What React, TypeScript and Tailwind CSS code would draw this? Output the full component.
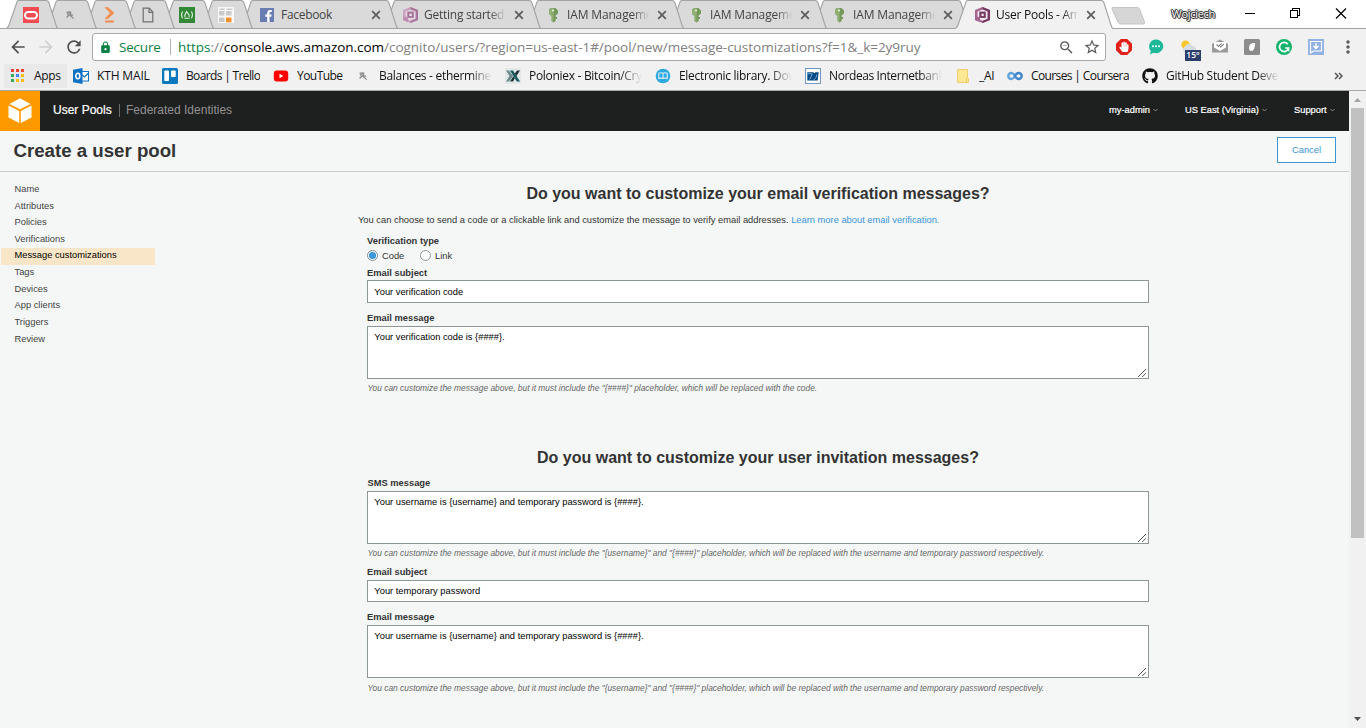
import React from "react";
import {
  MdArrowBack,
  MdArrowForward,
  MdRefresh,
  MdStarBorder,
  MdMoreVert,
  MdLock,
  MdZoomOut,
} from "react-icons/md";
import { FaGithub, FaFacebookF, FaHandPaper } from "react-icons/fa";

/* ---------- favicons ---------- */

const OracleIcon = () => (
  <svg width="16" height="16" viewBox="0 0 16 16">
    <rect width="16" height="16" fill="#f24b52" />
    <rect x="2" y="5" width="12" height="6.5" rx="3.2" fill="none" stroke="#fff" strokeWidth="2" />
  </svg>
);

const PickIcon = () => (
  <svg width="16" height="16" viewBox="0 0 16 16" fill="none" stroke="#8c8c8c">
    <path d="M4.5 5.2h4.8M5 7.5l3-3M4.6 10.5l3.8-4M7 7.2l4.6 4.4M8.6 5.5v2.7h2.6" strokeWidth="1.3" />
  </svg>
);

const PromptIcon = () => (
  <svg width="16" height="18" viewBox="0 0 16 18">
    <path d="M4 1.500h3l6 5.500-6 5.500H4L9.500 7z" fill="#f58b4c" stroke="#f58b4c" strokeWidth=".6" />
    <path d="M4 15.500h9" stroke="#f58b4c" strokeWidth="2" />
  </svg>
);

const PageIcon = () => (
  <svg width="12" height="16" viewBox="0 0 12 16" fill="none" stroke="#6e6e6e" strokeWidth="1.2">
    <path d="M1.2 1.2h6l3.6 3.8v9.8H1.2z" />
    <path d="M7 1.2V5.4h3.8" />
  </svg>
);

const CampIcon = () => (
  <svg width="16" height="16" viewBox="0 0 16 16">
    <rect width="16" height="16" fill="#338836" />
    <g fill="none" stroke="#e6f3e6" strokeWidth="1.1">
      <path d="M3.600 4.500q-2 3.300 0 6.800M12.400 4.500q2 3.300 0 6.800M5.500 11.300h5" />
      <path d="M6 10q-.6-2 1.500-5.400 3.400 3.400 2.500 5.400" />
    </g>
  </svg>
);

const CubesIcon = () => (
  <svg width="16" height="16" viewBox="0 0 16 16">
    <rect width="16" height="16" fill="#f8f8f8" />
    <g fill="#c9c9c9">
      <path d="M1 3l1.500-1.500H7L6 3zM8 3l1.500-1.500H15L13.500 3z" />
      <rect x="1" y="4" width="5.500" height="4.500" />
      <rect x="8" y="4" width="5.500" height="4.500" />
      <rect x="1" y="10.500" width="5.500" height="4.500" />
    </g>
    <rect x="8" y="10.500" width="5.500" height="4.800" fill="#f7902a" />
  </svg>
);

const FacebookIcon = () => (
  <span className="relative block h-[14px] w-[14px] overflow-hidden bg-[#6a7db3]">
    <FaFacebookF className="absolute left-[4px] top-[2px] h-[12px] w-[9px] text-white" />
  </span>
);

const CognitoIcon = ({ soft }: { soft?: boolean }) => (
  <svg width="15" height="16" viewBox="0 0 15 16">
    <path d="M7.500 0L15 3v10l-7.500 3L0 13V3z" fill={soft ? "#c9a3bf" : "#a4668f"} />
    <path d="M7.500 0L15 3v10l-7.500 3v-2.500l5-1.700V4.400l-5-2z" fill={soft ? "#a9749b" : "#753a63"} />
    <path d="M7.500 2.400l5 2v7.400l-5 2-5-2V4.400z" fill={soft ? "#e0d5dd" : "#f1e6ee"} />
    <rect x="4.300" y="4.600" width="6.500" height="6.300" fill={soft ? "#a9749b" : "#753a63"} />
    <rect x="6.500" y="6.700" width="2.200" height="2.300" fill="#eee" />
    <path d="M0 9.500l5 .5v5L0 13z" fill={soft ? "#c08cb3" : "#a4668f"} />
  </svg>
);

const KeyIcon = () => (
  <svg width="10" height="16" viewBox="0 0 10 16">
    <path d="M2.500 1h5L10 3.500v3L7.600 8.500V10H9v2H7.600v2L5.600 15.500 3.600 14V9L1 7V3z" fill="#75995a" />
    <path d="M1 3l2-2h2.500v14.500L3.600 14V9L1 7z" fill="#8fb072" />
    <circle cx="5" cy="3.500" r="1.100" fill="#e5efdc" />
  </svg>
);

const OutlookIcon = () => (
  <svg width="16" height="16" viewBox="0 0 16 16">
    <rect x="8" y="3.500" width="7.500" height="9.500" fill="#fff" stroke="#0f72c4" />
    <path d="M8 6l3.500 3L15.500 5" fill="none" stroke="#0f72c4" strokeWidth="1.200" />
    <path d="M0 1.800L9.500 0v16L0 14.200z" fill="#0f72c4" />
    <ellipse cx="4.800" cy="8" rx="2" ry="2.700" fill="none" stroke="#fff" strokeWidth="1.500" />
  </svg>
);

const TrelloIcon = () => (
  <svg width="16" height="16" viewBox="0 0 16 16">
    <rect width="16" height="16" rx="1.500" fill="#0c79bf" />
    <rect x="2.300" y="2.500" width="4.700" height="10.500" rx=".8" fill="#fff" />
    <rect x="9" y="2.500" width="4.700" height="6.500" rx=".8" fill="#fff" />
  </svg>
);

const YoutubeIcon = () => (
  <svg width="16" height="16" viewBox="0 0 16 16">
    <rect x=".8" y="2.500" width="14.400" height="11" rx="3" fill="#f00" />
    <path d="M6.500 5.800v4.400L10.300 8z" fill="#fff" />
  </svg>
);

const PoloniexIcon = () => (
  <svg width="16" height="16" viewBox="0 0 16 16">
    <rect width="16" height="16" fill="#e3e9e9" />
    <path d="M1 2.500h3L8 8l-4 5.500H1L4.500 8z" fill="#6a8a8c" />
    <path d="M5 2.500h3L15 13.500h-3.200z" fill="#15595f" />
    <path d="M12 2.500h3L11.500 8 9.800 5.600zM5 13.500h3L9.800 10.500 8.300 8.200z" fill="#22343a" />
  </svg>
);

const LibraryIcon = () => (
  <svg width="16" height="16" viewBox="0 0 16 16">
    <circle cx="8" cy="8" r="7.300" fill="#2eaae1" />
    <path d="M3.800 5.300q2.300-1 4.200 0 2-1 4.200 0v5.200q-2.200-.8-4.200 0-2-.8-4.200 0zM8 5.300v5.200" fill="none" stroke="#d9f0fb" strokeWidth="1.100" />
  </svg>
);

const NordeaIcon = () => (
  <svg width="16" height="16" viewBox="0 0 16 16">
    <rect x=".5" y=".5" width="15" height="15" fill="#fff" stroke="#6f97c0" />
    <path d="M2.300 4.200h6l1.200 1 1-1h3.200l-1 8.300H2.300z" fill="#004b87" />
    <path d="M2.300 6q3-.8 5 0l-2.500 5.500M8.500 12q3-2 3.500-5.500" fill="none" stroke="#9fbdd8" strokeWidth=".8" />
  </svg>
);

const FolderIcon = () => (
  <svg width="16" height="16" viewBox="0 0 16 16">
    <path d="M2.500 1.500h10v9h1v4h-11z" fill="#ffe793" stroke="#edd070" />
    <path d="M11.500 10.500v4" stroke="#e9c956" />
  </svg>
);

const CourseraIcon = () => (
  <svg width="16" height="16" viewBox="0 0 16 16" fill="none" strokeWidth="2.400">
    <path d="M8 8C6.500 5.500 5.500 5 4.300 5a3 3 0 000 6C6.500 11 7.500 8.500 8 8" stroke="#5fa3dd" />
    <path d="M8 8c1-2 2-3 3.700-3a3 3 0 010 6C10 11 9 10 8 8" stroke="#3f86cc" />
  </svg>
);

/* ---------- tab strip ---------- */

type TabProps = {
  icon: React.ReactNode;
  title?: string;
  active?: boolean;
  first?: boolean;
  z: string;
  fade?: boolean;
};

const Tab = ({ icon, title, active, first, z, fade }: TabProps) => {
  const w = title ? 158 : 52;
  const outline = `M0 28.5C2 28 2.500 26.500 3 25L11 2C11.500 .8 12 .5 13 .5H${w - 12}C${w - 10} .5 ${w - 9.5} 1.500 ${w - 9} 3L${w - 2} 25C${w - 1.5} 27 ${w - 1} 28 ${w} 28.5`;
  return (
    <div className={`relative h-[29px] shrink-0 ${z} ${title ? "w-[158px]" : "w-[52px]"} ${first ? "" : "-ml-[13px]"}`}>
      <svg className="absolute inset-0" width={w} height="29" viewBox={`0 0 ${w} 29`}>
        <path d={`${outline}V29H0z`} fill={active ? "#f1f1f1" : "#dadada"} />
        <path d={outline} fill="none" stroke="#a3a3a3" strokeWidth="1.100" />
        {!active && <path d={`M0 28.500H${w}`} stroke="#a3a3a3" />}
      </svg>
      {title ? (
        <div className="relative flex h-[30px] items-center pl-5">
          <span className="flex w-[21px] shrink-0 items-center">{icon}</span>
          <span
            className={`w-[84px] overflow-hidden whitespace-nowrap text-[12px] ${active ? "text-[#111]" : "text-[#444]"} ${title === "Facebook" ? "tracking-[-0.3px]" : title.startsWith("IAM") ? "tracking-[-0.15px]" : "tracking-[-0.25px]"} ${fade ? "[mask-image:linear-gradient(to_right,black_78%,transparent_98%)]" : ""}`}
          >
            {title}
          </span>
          <svg className="ml-[6px] shrink-0" width="10" height="10" viewBox="0 0 10 10">
            <path d="M1.200 1.200l7.600 7.600M8.800 1.200L1.200 8.800" stroke="#5c5c5c" strokeWidth="1.700" />
          </svg>
        </div>
      ) : (
        <div className="relative flex h-[30px] items-center justify-center pr-[2px]">{icon}</div>
      )}
    </div>
  );
};

const TabStrip = () => (
  <div className="flex h-[29px] bg-white pl-[6px] shadow-[inset_0_-1px_0_#a3a3a3]">
    <Tab z="z-[12]" first icon={<OracleIcon />} />
    <Tab z="z-[11]" icon={<PickIcon />} />
    <Tab z="z-[10]" icon={<PromptIcon />} />
    <Tab z="z-[9]" icon={<PageIcon />} />
    <Tab z="z-[8]" icon={<CampIcon />} />
    <Tab z="z-[7]" icon={<CubesIcon />} />
    <div className="flex shrink-0 [&>div+div]:-ml-[15px]">
      <Tab z="z-[6]" title="Facebook" icon={<FacebookIcon />} />
      <Tab z="z-[5]" fade title="Getting started" icon={<CognitoIcon soft />} />
      <Tab z="z-[4]" fade title="IAM Management" icon={<span className="pl-[2px]"><KeyIcon /></span>} />
      <Tab z="z-[3]" fade title="IAM Management" icon={<span className="pl-[2px]"><KeyIcon /></span>} />
      <Tab z="z-[2]" fade title="IAM Management" icon={<span className="pl-[2px]"><KeyIcon /></span>} />
      <Tab z="z-[20]" fade active title="User Pools - Amazon" icon={<CognitoIcon />} />
    </div>
    <svg className="-ml-[2px] mt-[7px] shrink-0" width="35" height="18" viewBox="0 0 35 18">
      <path d="M2 .5h24c1.500 0 2 .5 2.500 1.500l5 13c.5 1.500 0 2-1.500 2H10c-1.500 0-2.500-.5-3-2L1 2C.6 1 1 .5 2 .5z" fill="#d6d6d6" stroke="#c4c4c4" />
    </svg>
    <span className="ml-auto mr-[29px] mt-[6px] text-[11px] leading-4 tracking-[-0.3px] text-white [text-shadow:1px_0_0_#333,-1px_0_0_#333,0_1px_0_#333,0_-1px_0_#333,1px_1px_1px_#555,-1px_-1px_1px_#555]">
      Wojciech
    </span>
    <svg className="mt-[7px] shrink-0" width="122" height="14" viewBox="0 0 122 14" fill="none" stroke="#000" shapeRendering="crispEdges">
      <path d="M1 6.500h10M46.500 3.500h7v7h-7zM48.500 3V1.500h7v7H54" />
      <path d="M92 1.500l10 10M102 1.500l-10 10" shapeRendering="auto" strokeWidth="1.200" />
    </svg>
  </div>
);

/* ---------- toolbar ---------- */

const Toolbar = () => (
  <div className="flex h-[33px] items-center bg-[#f1f1f1] pt-[3px]">
    <MdArrowBack className="ml-[8px] h-5 w-5 text-[#505050]" />
    <MdArrowForward className="ml-[8px] h-5 w-5 text-[#cfcfcf]" />
    <MdRefresh className="ml-[8px] h-5 w-5 text-[#505050]" />
    <div className="ml-[8px] flex h-[28px] w-[1014px] items-center rounded-[3px] border border-[#a8a8a8] bg-white">
      <MdLock className="ml-[6px] h-[13px] w-[13px] text-[#0b8043]" />
      <span className="ml-[7px] w-[49px] whitespace-nowrap text-[13.5px] leading-5 tracking-[-0.2px] text-[#0b8043]">Secure</span>
      <span className="mx-[2px] h-4 w-px bg-[#b5b5b5]" />
      <span className="ml-[5px] w-[880px] whitespace-nowrap text-[13.5px] leading-5 tracking-[-0.025px] text-[#808080]">
        <span className="text-[#0b8043]">https</span>://<span className="text-black">console.aws.amazon.com</span>
        /cognito/users/?region=us-east-1#/pool/new/message-customizations?f=1&amp;_k=2y9ruy
      </span>
      <MdZoomOut className="h-[17px] w-[17px] shrink-0 text-[#5a5a5a]" />
      <MdStarBorder className="ml-[8px] h-[18px] w-[18px] shrink-0 text-[#5a5a5a]" />
    </div>
    <svg className="ml-[10px]" width="16" height="16" viewBox="0 0 16 16">
      <path d="M4.800 0h6.400L16 4.800v6.400L11.200 16H4.800L0 11.200V4.800z" fill="#e0201b" />
      <FaHandPaper x="2.700" y="2.500" size="10.500" color="#fff" />
    </svg>
    <svg className="ml-[16px]" width="16" height="16" viewBox="0 0 16 16">
      <path d="M8 .5a7.300 6.800 0 11-2.500 13.200L2 15.500l.8-3.500A7 7 0 018 .5z" fill="#1db89a" />
      <g fill="#fff"><circle cx="5" cy="7.300" r="1" /><circle cx="8" cy="7.300" r="1" /><circle cx="11" cy="7.300" r="1" /></g>
    </svg>
    <div className="relative ml-[16px] h-4 w-4">
      <svg width="16" height="16" viewBox="0 0 16 16">
        <circle cx="5.500" cy="5.800" r="4.200" fill="#f9c62b" />
        <path d="M4 13a3 3 0 01.500-5A4.500 4.500 0 0112.500 7a3 3 0 011 6z" fill="#d5dce2" />
      </svg>
      <span className="absolute left-[5px] top-[11px] flex h-[11px] w-4 items-center justify-center bg-[#2c3e6b] text-[8.5px] font-semibold leading-none text-white">15°</span>
    </div>
    <svg className="ml-[16px]" width="16" height="16" viewBox="0 0 16 16">
      <path d="M0 5l8-4.500L16 5v8.500H0z" fill="#9b9b9b" />
      <path d="M2 3h12v5.500L8 12 2 8.500z" fill="#fff" />
      <path d="M4.500 5.500l2 2 3-3M8 7.500l.8.500 3-3" fill="none" stroke="#888" strokeWidth="1.100" />
    </svg>
    <svg className="ml-[16px]" width="16" height="16" viewBox="0 0 16 16">
      <rect width="16" height="16" rx="1.500" fill="#8c8c8c" />
      <path d="M11 4C6.500 4 5 5.800 5 8.500 5 11 5.800 12 7 12c3 0 4-3.500 4-8z" fill="#fff" />
    </svg>
    <svg className="ml-[16px]" width="16" height="16" viewBox="0 0 16 16">
      <circle cx="8" cy="8" r="8" fill="#15b36b" />
      <path d="M11.800 5.200A4.600 4.600 0 1012.600 9H9.200M12.600 8.800v3.400" fill="none" stroke="#fff" strokeWidth="1.700" />
    </svg>
    <svg className="ml-[16px]" width="16" height="16" viewBox="0 0 16 16">
      <rect width="16" height="16" fill="#91b2e2" />
      <path d="M2.500 2.500h11v9.500h-8l-3 2z" fill="none" stroke="#fff" strokeWidth="1.200" />
      <path d="M8 4v5.500M5.500 7L8 9.600 10.500 7" fill="none" stroke="#fff" strokeWidth="1.400" />
    </svg>
    <MdMoreVert className="ml-[14px] h-5 w-5 text-[#5a5a5a]" />
  </div>
);

/* ---------- bookmarks ---------- */

type BookmarkProps = { icon: React.ReactNode; label: string; box: string; text?: string; fade?: boolean };

const Bookmark = ({ icon, label, box, text = "", fade }: BookmarkProps) => (
  <div className={`flex shrink-0 items-center ${box}`}>
    <span className="flex h-4 w-4 shrink-0 items-center justify-center">{icon}</span>
    <span
      className={`ml-2 overflow-hidden whitespace-nowrap ${text} ${fade ? "w-[113px] [mask-image:linear-gradient(to_right,black_80%,transparent)]" : ""}`}
    >
      {label}
    </span>
  </div>
);

const appColors = ["#ea4335", "#ea4335", "#ea4335", "#34a853", "#4285f4", "#fbbc05", "#34a853", "#fbbc05", "#fbbc05"];

const BookmarksBar = () => (
  <div className="flex h-[29px] items-center border-b border-[#a9a9a9] bg-[#f1f1f1] pb-[1px] pl-[4px] text-[12px] text-[#111]">
    <div className="flex h-6 w-[63px] items-center bg-[#e9e9e9] pl-[7px]">
      <svg width="13" height="13" viewBox="0 0 13 13">
        {appColors.map((c, i) => (
          <rect key={i} x={(i % 3) * 5} y={Math.floor(i / 3) * 5} width="3" height="3" fill={c} />
        ))}
      </svg>
      <span className="ml-[10px] tracking-[-0.3px]">Apps</span>
    </div>
    <span className="w-[6px]" />
    <Bookmark box="w-[89px]" icon={<OutlookIcon />} label="KTH MAIL" text="tracking-[-0.15px]" />
    <Bookmark box="w-[111px]" icon={<TrelloIcon />} label="Boards | Trello" text="tracking-[-0.65px]" />
    <Bookmark box="w-[82px]" icon={<YoutubeIcon />} label="YouTube" text="tracking-[-0.55px]" />
    <Bookmark box="w-[150px]" fade icon={<PickIcon />} label="Balances - ethermine.org" text="tracking-[-0.3px]" />
    <Bookmark box="w-[150px]" fade icon={<PoloniexIcon />} label="Poloniex - Bitcoin/Crypto" text="tracking-[-0.3px]" />
    <Bookmark box="w-[150px]" fade icon={<LibraryIcon />} label="Electronic library. Download" text="tracking-[-0.3px]" />
    <Bookmark box="w-[150px]" fade icon={<NordeaIcon />} label="Nordeas Internetbank" text="tracking-[-0.4px]" />
    <Bookmark box="w-[52px]" icon={<FolderIcon />} label="_AI" text="tracking-[-0.3px]" />
    <Bookmark box="w-[135px]" icon={<CourseraIcon />} label="Courses | Coursera" text="tracking-[-0.62px]" />
    <Bookmark box="w-[150px]" fade icon={<FaGithub className="h-4 w-4 text-[#111]" />} label="GitHub Student Developer" text="tracking-[-0.3px]" />
    <svg className="ml-[42px]" width="10" height="8" viewBox="0 0 10 8" fill="none" stroke="#555" strokeWidth="1.500">
      <path d="M1 1l3 3-3 3M5 1l3 3-3 3" />
    </svg>
  </div>
);

/* ---------- console page ---------- */

const HeaderMenu = ({ label, box }: { label: string; box: string }) => (
  <div className={`flex shrink-0 items-center text-[9.33px] text-white [-webkit-text-stroke:0.2px_white] ${box}`}>
    <span className="whitespace-nowrap">{label}</span>
    <svg className="ml-[3px]" width="5" height="4" viewBox="0 0 5 4">
      <path d="M.5 1l2 2 2-2" fill="none" stroke="#8a8a8a" />
    </svg>
  </div>
);

const ConsoleHeader = () => (
  <div className="flex h-10 items-center bg-[#1e1f1f]">
    <div className="flex h-10 w-10 items-center justify-center bg-[#ff9900]">
      <svg width="24" height="26" viewBox="0 0 24 26" fill="#fff">
        <path d="M12 .3l10.500 5.600L12 11.200 1.500 5.900z" />
        <path d="M.5 7.500l10.700 5.600v12L.5 19.600zM23.500 7.500l-10.700 5.600v12l10.700-5.500z" />
      </svg>
    </div>
    <div className="flex h-10 items-center pb-[2px] text-[12px]">
      <span className="ml-[13px] w-[66px] whitespace-nowrap text-white [-webkit-text-stroke:0.2px_white]">User Pools</span>
      <span className="h-[13px] w-px bg-[#6b6b6b]" />
      <span className="ml-[6px] whitespace-nowrap text-[#929292]">Federated Identities</span>
    </div>
    <div className="ml-auto flex h-10 items-center pb-px">
      <HeaderMenu label="my-admin" box="w-[76px]" />
      <HeaderMenu label="US East (Virginia)" box="w-[109px]" />
      <HeaderMenu label="Support" box="w-[55px]" />
    </div>
  </div>
);

const steps = [
  "Name",
  "Attributes",
  "Policies",
  "Verifications",
  "Message customizations",
  "Tags",
  "Devices",
  "App clients",
  "Triggers",
  "Review",
];

const Heading = ({ children, gap }: { children: React.ReactNode; gap: string }) => (
  <h2 className={`h-5 whitespace-nowrap text-center text-[16px] font-bold leading-5 text-[#333] ${gap}`}>{children}</h2>
);

const Label = ({ children, gap }: { children: React.ReactNode; gap: string }) => (
  <div className={`ml-[9px] h-[14px] text-[9.33px] font-bold leading-[14px] text-[#333] ${gap}`}>{children}</div>
);

const Area = ({ value }: { value: string }) => (
  <div className="relative ml-[9px] mt-px h-[53px] w-[782px]">
    <textarea
      className="block h-[53px] w-[782px] resize-none border border-[#8d9797] bg-white px-[6.33px] py-[4px] text-[9.33px] leading-[13px] text-black"
      defaultValue={value}
    />
    <svg className="absolute bottom-[2px] right-[3px]" width="8" height="8" viewBox="0 0 8 8" stroke="#555" fill="none">
      <path d="M0 8L8 0M4.200 8L8 4.200" />
    </svg>
  </div>
);

const Field = ({ value, box }: { value: string; box: string }) => (
  <input
    className={`ml-[9px] block w-[782px] border border-[#8d9797] bg-white px-[6.33px] text-[9.33px] leading-[13px] text-black ${box}`}
    defaultValue={value}
  />
);

const Hint = ({ children, gap }: { children: React.ReactNode; gap: string }) => (
  <div className={`ml-[9.500px] h-[14px] whitespace-nowrap text-[8.4px] italic leading-[14px] text-[#666] ${gap}`}>{children}</div>
);

const Radio = ({ on, label, box }: { on?: boolean; label: string; box: string }) => (
  <label className={`flex items-center text-[9.33px] text-[#333] ${box}`}>
    <svg width="12" height="12" viewBox="0 0 12 12">
      <circle cx="5.500" cy="5.500" r="5" fill="#fff" stroke={on ? "#7f8b93" : "#8d9797"} strokeWidth="1" />
      {on && <circle cx="5.500" cy="5.500" r="3.600" fill="#3b99d9" />}
    </svg>
    <span className="ml-[3px] pt-px">{label}</span>
  </label>
);

const MessageForm = () => (
  <main className="ml-[203px] w-[800px]">
    <Heading gap="mt-3">Do you want to customize your email verification messages?</Heading>
    <p className="mt-[10px] h-3 whitespace-nowrap text-[9.33px] leading-3 text-[#333]">
      You can choose to send a code or a clickable link and customize the message to verify email addresses.{" "}
      <a className="text-[#3b95d6]">Learn more about email verification.</a>
    </p>
    <Label gap="mt-2">Verification type</Label>
    <div className="ml-[9px] mt-px flex h-[14px] items-center">
      <Radio on label="Code" box="w-[53px]" />
      <Radio label="Link" box="" />
    </div>
    <Label gap="mt-[3px]">Email subject</Label>
    <Field box="h-[23px]" value="Your verification code" />
    <Label gap="mt-2">Email message</Label>
    <Area value="Your verification code is {####}." />
    <Hint gap="mt-[2px]">
      You can customize the message above, but it must include the "{"{####}"}" placeholder, which will be replaced with the code.
    </Hint>

    <Heading gap="mt-[53px]">Do you want to customize your user invitation messages?</Heading>
    <Label gap="mt-2 pl-[0.5px]">SMS message</Label>
    <Area value="Your username is {username} and temporary password is {####}." />
    <Hint gap="mt-[2px]">
      You can customize the message above, but it must include the "{"{username}"}" and "{"{####}"}" placeholder, which will be replaced with the username and temporary password respectively.
    </Hint>
    <Label gap="mt-[5px]">Email subject</Label>
    <Field box="mt-px h-[22px]" value="Your temporary password" />
    <Label gap="mt-2">Email message</Label>
    <Area value="Your username is {username} and temporary password is {####}." />
    <Hint gap="mt-[3px]">
      You can customize the message above, but it must include the "{"{username}"}" and "{"{####}"}" placeholder, which will be replaced with the username and temporary password respectively.
    </Hint>
  </main>
);

const Scrollbar = () => (
  <div className="flex w-[17px] shrink-0 flex-col items-center bg-[#f1f1f1]">
    <svg width="17" height="17" viewBox="0 0 17 17">
      <path d="M5 11l3.500-4 3.500 4z" fill="#a3a3a3" />
    </svg>
    <div className="h-[430px] w-[13px] bg-[#c1c1c1]" />
    <svg className="mt-auto" width="17" height="17" viewBox="0 0 17 17">
      <path d="M5 6h7L8.500 10z" fill="#505050" />
    </svg>
  </div>
);

export default function App() {
  return (
    <div className="flex h-[728px] w-[1366px] flex-col overflow-hidden bg-[#f1f1f1] font-['Open_Sans','Noto_Sans',sans-serif]">
      <TabStrip />
      <Toolbar />
      <BookmarksBar />
      <div className="flex min-h-0 flex-1">
        <div className="flex-1 overflow-hidden bg-[#f5f7f7] font-['Liberation_Sans',Arial,sans-serif]">
          <ConsoleHeader />
          <div className="flex h-[41px] items-center justify-between border-b border-[#c9cccc] pl-[13.5px] pr-[13px]">
            <h1 className="pb-px text-[18.67px] font-bold leading-6 text-[#333]">Create a user pool</h1>
            <button className="mb-[2px] h-[26px] w-[59px] border border-[#3b95d6] bg-white pt-[1.5px] text-[9.33px] text-[#3b95d6]">Cancel</button>
          </div>
          <div className="flex">
            <nav className="ml-px mt-[9.33px] w-[154px] shrink-0">
              {steps.map((s) => (
                <div
                  key={s}
                  className={`flex h-[16.67px] items-center whitespace-nowrap pl-[13.5px] pt-[0.4px] text-[9.33px] ${s === "Message customizations" ? "bg-[#f9e6c8] text-black" : "text-[#444]"}`}
                >
                  {s}
                </div>
              ))}
            </nav>
            <MessageForm />
          </div>
        </div>
        <Scrollbar />
      </div>
    </div>
  );
}
